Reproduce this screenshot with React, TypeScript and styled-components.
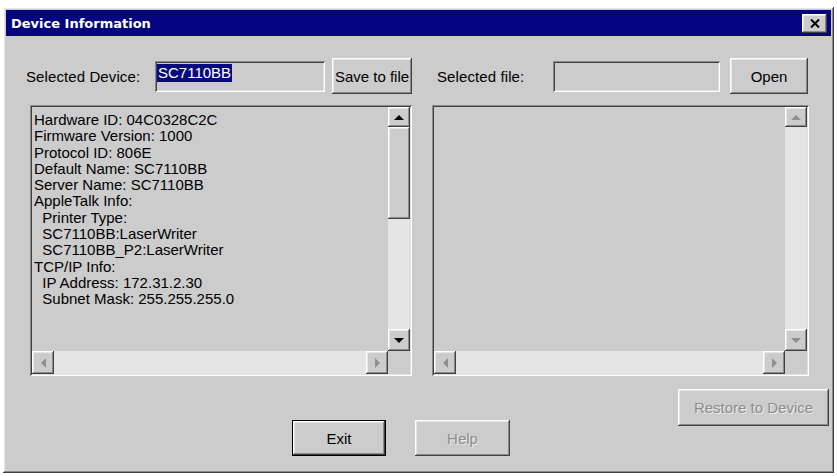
import { createGlobalStyle } from 'styled-components';
import styled from 'styled-components';

const GlobalStyle = createGlobalStyle`
    html, body {
        margin: 0;
        padding: 0;
        background: #ffffff;
    }
    body {
        font-family: "Liberation Sans", Arial, sans-serif;
        font-size: 15px;
        color: #000000;
    }
`;

const FACE = '#cccccc';

const raised = `
    box-shadow:
        inset -1px -1px 0 #404040,
        inset 1px 1px 0 #ffffff,
        inset -2px -2px 0 #8a8a8a,
        inset 2px 2px 0 #e6e6e6;
`;

const sunken = `
    box-shadow:
        inset 1px 1px 0 #8a8a8a,
        inset -1px -1px 0 #ffffff,
        inset 2px 2px 0 #404040,
        inset -2px -2px 0 #e0e0e0;
`;

const Window = styled.div`
    box-sizing: border-box;
    margin: 7px 0 0 3px;
    width: 831px;
    height: 466px;
    background: ${FACE};
    padding: 3px;
    display: flex;
    flex-direction: column;
    ${raised}
`;

const TitleBar = styled.div`
    height: 26px;
    flex-shrink: 0;
    background: #05057f;
    display: flex;
    align-items: center;
    justify-content: space-between;
    padding: 0 4px 0 5px;
    color: #ffffff;
    font-family: "DejaVu Sans", Verdana, sans-serif;
    font-weight: bold;
    font-size: 13px;
`;

const CloseBox = styled.div`
    width: 25px;
    height: 19px;
    background: ${FACE};
    display: flex;
    align-items: center;
    justify-content: center;
    ${raised}
`;

const Body = styled.div`
    display: grid;
    grid-template-columns: 402px 397px;
    column-gap: 18px;
    padding: 22px 0 0 6px;
`;

const Column = styled.div`
    display: flex;
    flex-direction: column;
`;

const HeaderRow = styled.div<{ $indent: number }>`
    display: flex;
    align-items: center;
    height: 36px;
    padding-left: ${(p) => p.$indent}px;
`;

const Label = styled.span<{ $width: number }>`
    width: ${(p) => p.$width}px;
    flex-shrink: 0;
    letter-spacing: 0.1px;
`;

const Spacer = styled.span<{ $width: number }>`
    width: ${(p) => p.$width}px;
    flex-shrink: 0;
`;

const Field = styled.div<{ $width: number }>`
    box-sizing: border-box;
    width: ${(p) => p.$width}px;
    height: 31px;
    padding: 3px 2px;
    background: ${FACE};
    ${sunken}
`;

const Selection = styled.span`
    display: inline-block;
    background: #0a0a80;
    color: #ffffff;
    padding: 0 1px;
    line-height: 18px;
`;

const Button = styled.button<{ $width: number; $height?: number; $default?: boolean; $top?: number }>`
    box-sizing: border-box;
    flex-shrink: 0;
    width: ${(p) => p.$width}px;
    height: ${(p) => p.$height ?? 36}px;
    margin-top: ${(p) => p.$top ?? 0}px;
    background: ${FACE};
    border: ${(p) => (p.$default ? '1px solid #000000' : 'none')};
    padding: 0;
    font-family: inherit;
    font-size: 15px;
    color: #000000;
    ${raised}
    &:disabled {
        color: #8c8c8c;
        text-shadow: 1px 1px 0 #ececec;
    }
`;

const ListBox = styled.div<{ $left: number; $width: number }>`
    box-sizing: border-box;
    margin: 11px 0 0 ${(p) => p.$left}px;
    width: ${(p) => p.$width}px;
    height: 271px;
    padding: 2px;
    display: grid;
    grid-template-columns: 1fr 22px;
    grid-template-rows: 1fr 23px;
    background: ${FACE};
    ${sunken}
`;

const ListText = styled.div`
    padding: 5px 0 0 2px;
    line-height: 16.3px;
    white-space: pre;
    overflow: hidden;
`;

const VScroll = styled.div`
    display: flex;
    flex-direction: column;
    background: #e4e4e4;
`;

const HScroll = styled.div`
    display: flex;
    background: #e4e4e4;
`;

const Track = styled.div`
    flex: 1;
`;

const Thumb = styled.div`
    height: 92px;
    flex-shrink: 0;
    background: ${FACE};
    ${raised}
`;

const Corner = styled.div`
    background: ${FACE};
`;

const Arrow = styled.div<{ $w: number; $h: number }>`
    width: ${(p) => p.$w}px;
    height: ${(p) => p.$h}px;
    flex-shrink: 0;
    background: ${FACE};
    display: flex;
    align-items: center;
    justify-content: center;
    ${raised}
`;

const Footer = styled.div`
    display: flex;
    align-items: flex-start;
    gap: 29px;
    padding: 13px 2px 0 286px;
`;

const Push = styled.div`
    flex: 1;
`;

type Dir = 'up' | 'down' | 'left' | 'right';

const TRI: Record<Dir, string> = {
    up: '0,5 5,0 10,5',
    down: '0,0 10,0 5,5',
    left: '5,0 5,10 0,5',
    right: '0,0 0,10 5,5',
};

function Tri({ dir, off }: { dir: Dir; off?: boolean }) {
    const vertical = dir === 'up' || dir === 'down';
    return (
        <svg width={vertical ? 10 : 5} height={vertical ? 5 : 10}>
            <polygon points={TRI[dir]} fill={off ? '#8f8f8f' : '#000000'} />
        </svg>
    );
}

interface ScrollListProps {
    lines?: string[];
    left: number;
    width: number;
    off?: boolean;
}

function ScrollList({ lines, left, width, off }: ScrollListProps) {
    return (
        <ListBox $left={left} $width={width}>
            <ListText>{lines?.join('\n')}</ListText>
            <VScroll>
                <Arrow $w={22} $h={20}>
                    <Tri dir="up" off={off} />
                </Arrow>
                {!off && <Thumb />}
                <Track />
                <Arrow $w={22} $h={22}>
                    <Tri dir="down" off={off} />
                </Arrow>
            </VScroll>
            <HScroll>
                <Arrow $w={22} $h={23}>
                    <Tri dir="left" off />
                </Arrow>
                <Track />
                <Arrow $w={22} $h={23}>
                    <Tri dir="right" off />
                </Arrow>
            </HScroll>
            <Corner />
        </ListBox>
    );
}

const deviceInfo = [
    'Hardware ID: 04C0328C2C',
    'Firmware Version: 1000',
    'Protocol ID: 806E',
    'Default Name: SC7110BB',
    'Server Name: SC7110BB',
    'AppleTalk Info:',
    '  Printer Type:',
    '  SC7110BB:LaserWriter',
    '  SC7110BB_P2:LaserWriter',
    'TCP/IP Info:',
    '  IP Address: 172.31.2.30',
    '  Subnet Mask: 255.255.255.0',
];

export default function App() {
    return (
        <>
            <GlobalStyle />
            <Window>
                <TitleBar>
                    <span>Device Information</span>
                    <CloseBox>
                        <svg width="10" height="9" viewBox="0 0 10 9">
                            <path d="M1 0.5 L9 8.5 M9 0.5 L1 8.5" stroke="#000" strokeWidth="2" />
                        </svg>
                    </CloseBox>
                </TitleBar>
                <Body>
                    <Column>
                        <HeaderRow $indent={14}>
                            <Label $width={129}>Selected Device:</Label>
                            <Field $width={170}>
                                <Selection>SC7110BB</Selection>
                            </Field>
                            <Spacer $width={7} />
                            <Button $width={80}>Save to file</Button>
                        </HeaderRow>
                        <ScrollList lines={deviceInfo} left={18} width={382} />
                    </Column>
                    <Column>
                        <HeaderRow $indent={5}>
                            <Label $width={116}>Selected file:</Label>
                            <Field $width={167} />
                            <Spacer $width={10} />
                            <Button $width={78}>Open</Button>
                        </HeaderRow>
                        <ScrollList left={0} width={377} off />
                    </Column>
                </Body>
                <Footer>
                    <Button $width={94} $top={31} $default>
                        Exit
                    </Button>
                    <Button $width={95} $top={31} disabled>
                        Help
                    </Button>
                    <Push />
                    <Button $width={151} $height={37} disabled>
                        Restore to Device
                    </Button>
                </Footer>
            </Window>
        </>
    );
}
